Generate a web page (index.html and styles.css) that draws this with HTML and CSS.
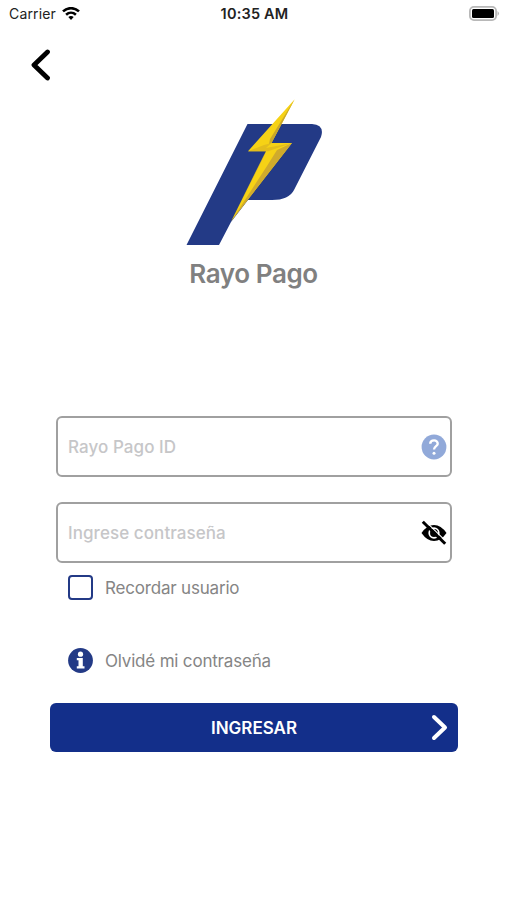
FILE: index.html
```html
<!DOCTYPE html>
<html lang="es">
<head>
    <meta charset="UTF-8">
    <meta name="viewport" content="width=device-width, initial-scale=1">
    <title>Rayo Pago</title>
    <link rel="stylesheet" href="styles.css">
</head>
<body>
    <div class="screen">
        <div class="status-bar">
            <div class="carrier">
                <span>Carrier</span>
                <svg class="wifi" width="18" height="14" viewBox="0 0 18 14" fill="none" stroke="#000" stroke-width="2.6">
                    <path d="M1 4.4C5.6.1 12.4.1 17 4.4"/>
                    <path d="M4.1 7.7C7 5.1 11 5.1 13.9 7.7"/>
                    <path d="M6.3 10.1Q9 8.1 11.7 10.1L9 12.9z" fill="#000" stroke="none"/>
                </svg>
            </div>
            <span class="time">10:35 AM</span>
            <svg class="battery" width="31" height="15" viewBox="0 0 31 15">
                <rect x=".9" y=".9" width="26.2" height="13.2" rx="4" fill="#fff" stroke="#b8b8b8" stroke-width="1.8"/>
                <rect x="3" y="3" width="22" height="9" rx="1.5" fill="#000"/>
                <path d="M28.5 5Q31.5 7.5 28.5 10z" fill="#b8b8b8"/>
            </svg>
        </div>

        <button class="back" type="button" aria-label="Volver">
            <svg width="20" height="32" viewBox="0 0 20 32" fill="none" stroke="#000" stroke-width="4.8" stroke-linecap="round" stroke-linejoin="round">
                <path d="M16.5 3 3 16 16.5 29"/>
            </svg>
        </button>

        <div class="brand">
            <svg class="logo" width="138" height="148" viewBox="186 98 138 148">
                <path d="M247.5 124H312Q325 125 321 137L294 190Q289 200 272 200H248L231 222 219 245H186.5z" fill="#233a86"/>
                <path d="M294.7 99.3 271.5 143H292L231.3 221 266 151.2H248z" fill="#f6d215"/>
                <path d="M294.7 99.3 271.5 143 269 144.5 270 139z" fill="#c9a72a"/>
                <path d="M248 151.2 264 145 271.5 143 266 148 292 143 268 151.2z" fill="#e3bd1c"/>
                <path d="M292 143 277 150 267 166 231.3 221z" fill="#d0ab2c"/>
                <path d="M266 151.2 231.3 221 263 158z" fill="#d0ab2c"/>
            </svg>
            <h1>Rayo Pago</h1>
        </div>

        <form class="login">
            <div class="field">
                <input type="text" placeholder="Rayo Pago ID">
                <svg width="26" height="26" viewBox="0 0 26 26">
                    <circle cx="13" cy="13" r="12.4" fill="#91a9d9"/>
                    <path d="M9.2 9.8C9.4 5.2 17 5.4 16.7 9.8 16.5 12.2 13 12.2 13 15.6" fill="none" stroke="#fff" stroke-width="2.4"/>
                    <circle cx="13" cy="19.2" r="1.5" fill="#fff"/>
                </svg>
            </div>
            <div class="field">
                <input type="password" placeholder="Ingrese contraseña">
                <svg width="26" height="26" viewBox="0 0 26 26">
                    <path d="M.5 13Q6 5 13 5T25.5 13Q20 21 13 21T.5 13z" fill="#000"/>
                    <circle cx="13" cy="13" r="4.8" fill="none" stroke="#fff" stroke-width="1.7"/>
                    <path d="M4 .8 26 22.3" stroke="#fff" stroke-width="1.1"/>
                    <path d="M1.8 1.8 24.2 23.8" stroke="#000" stroke-width="3"/>
                </svg>
            </div>
            <label class="option remember">
                <input type="checkbox">
                <span>Recordar usuario</span>
            </label>
            <a class="option forgot">
                <svg width="25" height="25" viewBox="0 0 25 25">
                    <circle cx="12.5" cy="12.5" r="12.4" fill="#233a86"/>
                    <circle cx="12.5" cy="6.2" r="2.6" fill="#fff"/>
                    <path d="M8.8 10H14.8V18.2H16.5V20.5H8.8V18.2H10.5V12.2H8.8z" fill="#fff"/>
                </svg>
                <span>Olvidé mi contraseña</span>
            </a>
            <button class="submit" type="button">
                <span>INGRESAR</span>
                <svg width="17" height="27" viewBox="0 0 17 27" fill="none" stroke="#fff" stroke-width="4" stroke-linecap="round" stroke-linejoin="round">
                    <path d="M3 3 14 13.5 3 24"/>
                </svg>
            </button>
        </form>
    </div>
</body>
</html>
```
FILE: styles.css
```css
* {
    box-sizing: border-box;
}

body {
    margin: 0;
    background: #fff;
    font-family: Inter, "Liberation Sans", sans-serif;
}

.screen {
    min-height: 900px;
}

svg {
    display: block;
    flex: none;
}

button {
    border: none;
    font-family: inherit;
}

.status-bar {
    display: grid;
    grid-template-columns: 1fr auto 1fr;
    align-items: center;
    height: 27px;
    padding: 0 7px 0 9px;
    font-size: 14px;
    color: #222;
}

.carrier {
    display: flex;
    align-items: center;
    gap: 6px;
    letter-spacing: .15px;
}

.time {
    font-size: 14.5px;
    font-weight: 600;
    letter-spacing: .2px;
}

.battery {
    justify-self: end;
}

.back {
    display: block;
    margin: 22px 0 0 31px;
    padding: 0;
    background: none;
}

.brand {
    display: flex;
    flex-direction: column;
    align-items: center;
    padding: 17px 0 0 2px;
}

.brand h1 {
    margin: 12px 2px 0 0;
    font-size: 26px;
    line-height: 32px;
    font-weight: 600;
    letter-spacing: -.4px;
    color: #808080;
}

.login {
    display: flex;
    flex-direction: column;
    margin: 126px 49px 0 50px;
}

.field {
    display: flex;
    align-items: center;
    height: 61px;
    margin: 0 6px 25px;
    padding: 0 3px 0 10px;
    border: 2px solid #a0a0a0;
    border-radius: 6px;
}

.field input {
    flex: 1;
    min-width: 0;
    padding: 0;
    border: none;
    outline: none;
    font: 500 17px Inter, "Liberation Sans", sans-serif;
    letter-spacing: .07px;
}

.field input::placeholder {
    color: #c6c6c8;
}

.option {
    display: flex;
    align-items: center;
    gap: 12px;
    height: 26px;
    margin-left: 18px;
    font-size: 17px;
    letter-spacing: -.19px;
    color: #858585;
}

.remember {
    margin-top: -13px;
}

.remember input {
    appearance: none;
    width: 25px;
    height: 25px;
    margin: 0 0 1px;
    border: 2px solid #233a86;
    border-radius: 4px;
}

.forgot {
    margin-top: 47px;
}

.forgot svg {
    margin-bottom: 1px;
}

.submit {
    display: grid;
    grid-template-columns: 1fr auto 1fr;
    align-items: center;
    height: 49px;
    margin-top: 29px;
    padding: 0 10px;
    border-radius: 6px;
    background: #132f8a;
    color: #fff;
    font-size: 17px;
    font-weight: 600;
}

.submit span {
    grid-column: 2;
}

.submit svg {
    justify-self: end;
}
```
